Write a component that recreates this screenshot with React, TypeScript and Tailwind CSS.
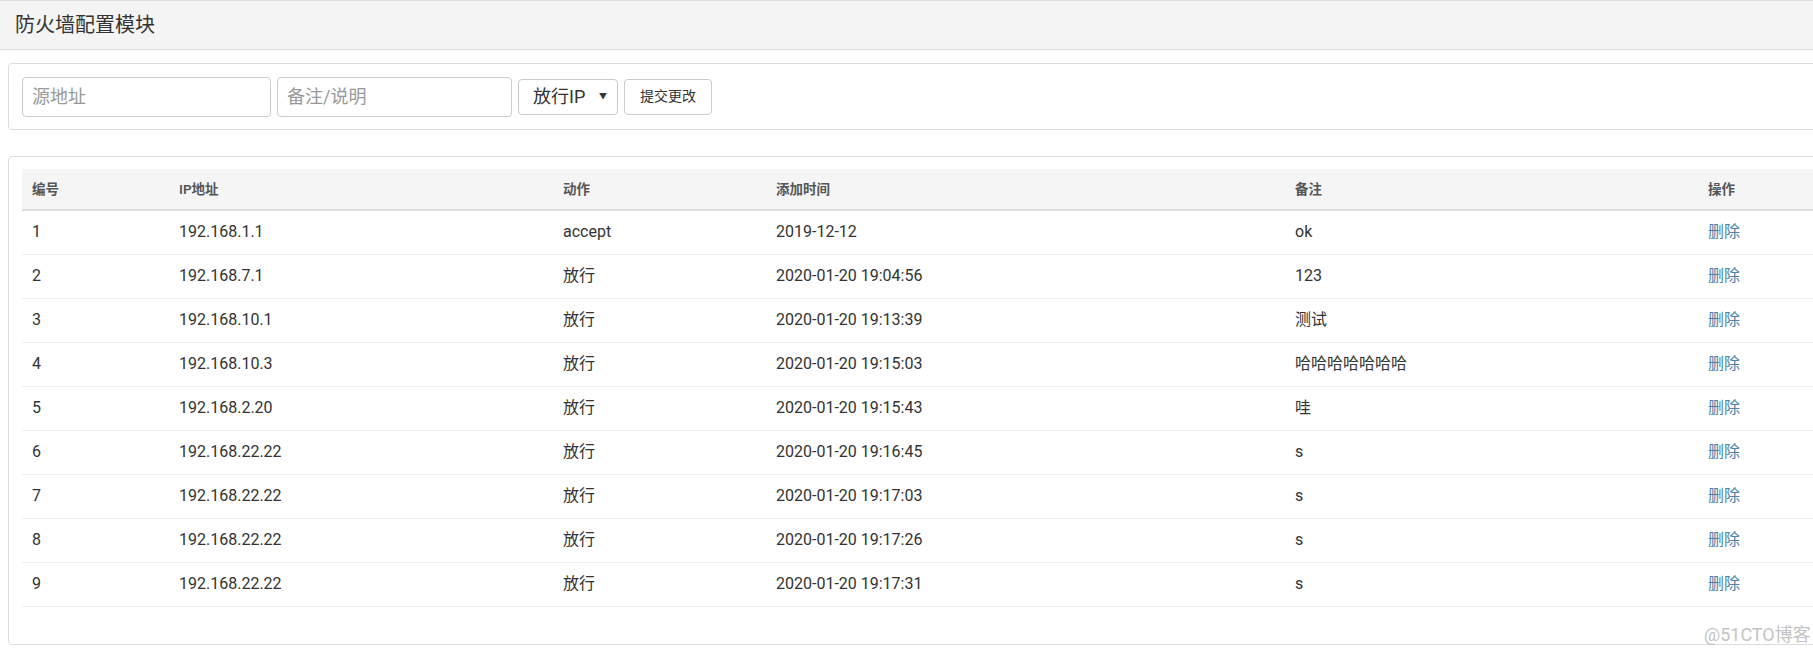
import { FC } from "react";

const rows = [
  { id: 1, ip: "192.168.1.1", action: "accept", time: "2019-12-12", note: "ok" },
  { id: 2, ip: "192.168.7.1", action: "放行", time: "2020-01-20 19:04:56", note: "123" },
  { id: 3, ip: "192.168.10.1", action: "放行", time: "2020-01-20 19:13:39", note: "测试" },
  { id: 4, ip: "192.168.10.3", action: "放行", time: "2020-01-20 19:15:03", note: "哈哈哈哈哈哈哈" },
  { id: 5, ip: "192.168.2.20", action: "放行", time: "2020-01-20 19:15:43", note: "哇" },
  { id: 6, ip: "192.168.22.22", action: "放行", time: "2020-01-20 19:16:45", note: "s" },
  { id: 7, ip: "192.168.22.22", action: "放行", time: "2020-01-20 19:17:03", note: "s" },
  { id: 8, ip: "192.168.22.22", action: "放行", time: "2020-01-20 19:17:26", note: "s" },
  { id: 9, ip: "192.168.22.22", action: "放行", time: "2020-01-20 19:17:31", note: "s" },
];

const App: FC = () => (
  <div
    className="relative w-[1813px] h-[659px] overflow-hidden bg-white text-[#333]"
    style={{ fontFamily: 'Roboto, "Noto Sans CJK SC", sans-serif' }}
  >
    <div className="w-[1850px]">
      {/* page title bar */}
      <div className="h-[50px] bg-[#f4f4f4] border-y border-[#ddd] flex items-center pl-[15px]">
        <h1 className="text-[20px] text-[#333] font-normal">防火墙配置模块</h1>
      </div>

      {/* form box */}
      <div className="ml-2 mt-[13px] h-[67px] border border-[#ddd] rounded-[4px] flex items-center pl-[13px] gap-[6px]">
        <input
          className="w-[249px] h-10 border border-[#ccc] rounded-[4px] px-[9px] text-[18px] placeholder:text-[#999] outline-none"
          placeholder="源地址"
        />
        <input
          className="w-[235px] h-10 border border-[#ccc] rounded-[4px] px-[9px] text-[18px] placeholder:text-[#999] outline-none"
          placeholder="备注/说明"
        />
        <div className="w-[100px] h-9 border border-[#ccc] rounded-[4px] flex items-center justify-between pl-[14px] pr-[10px] text-[18px] text-[#333]">
          <span>放行IP</span>
          <span className="text-[8px] leading-none text-[#333]">▼</span>
        </div>
        <button className="w-[88px] h-9 border border-[#ccc] rounded-[4px] bg-white text-[14px] text-[#333]">
          提交更改
        </button>
      </div>

      {/* table box */}
      <div className="ml-2 mt-[26px] h-[489px] border border-[#ddd] rounded-[4px] pt-3 px-[13px]">
        <table className="table-fixed w-[1815px] border-collapse text-[16px]">
          <colgroup>
            <col className="w-[147px]" />
            <col className="w-[384px]" />
            <col className="w-[213px]" />
            <col className="w-[519px]" />
            <col className="w-[413px]" />
            <col />
          </colgroup>
          <thead>
            <tr className="bg-[#f5f5f5] border-b-2 border-[#ddd] h-[41px]">
              {["编号", "IP地址", "动作", "添加时间", "备注", "操作"].map((h) => (
                <th key={h} className="text-left pl-[10px] text-[13.5px] font-semibold text-[#555]">
                  {h}
                </th>
              ))}
            </tr>
          </thead>
          <tbody>
            {rows.map((r) => (
              <tr key={r.id} className="h-[44px] border-b border-[#eee]">
                <td className="pl-[10px]">{r.id}</td>
                <td className="pl-[10px]">{r.ip}</td>
                <td className="pl-[10px]">{r.action}</td>
                <td className="pl-[10px]">{r.time}</td>
                <td className="pl-[10px]">{r.note}</td>
                <td className="pl-[10px]">
                  <a href="#" className="text-[#4a81ab]">删除</a>
                </td>
              </tr>
            ))}
          </tbody>
        </table>
      </div>
    </div>

    <span className="absolute left-[1704px] top-[621px] text-[18px] text-[#c4c4c4]">@51CTO博客</span>
  </div>
);

export default App;
